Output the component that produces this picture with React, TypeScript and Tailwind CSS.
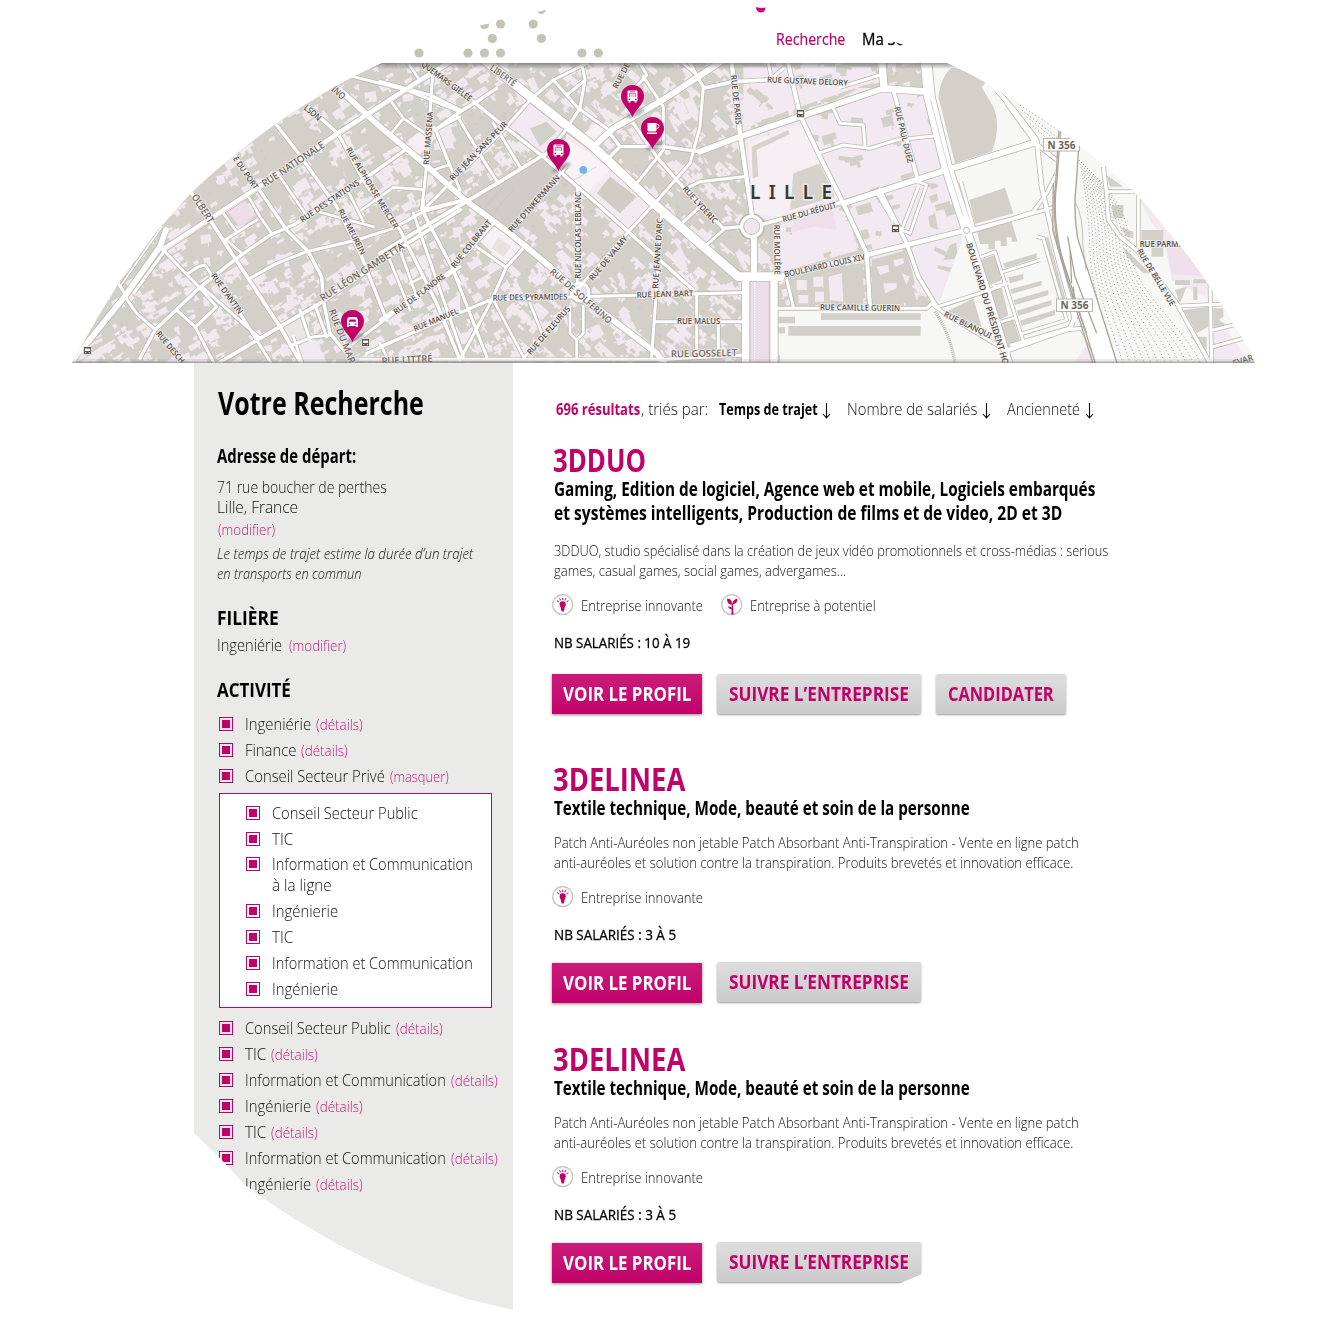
import { useLayoutEffect, useRef, useState, type ReactNode } from 'react';

/* Condensed text: squeezes a line horizontally to the given measure. */
function Fit({ w, className = '', children }: { w: number; className?: string; children: ReactNode }) {
  const ref = useRef<HTMLSpanElement>(null);
  const [scale, setScale] = useState(1);
  useLayoutEffect(() => {
    if (ref.current) setScale(w / ref.current.offsetWidth);
  }, [w]);
  return (
    <span className={`block shrink-0 whitespace-nowrap ${className}`} style={{ width: w }}>
      <span ref={ref} className="inline-block origin-left" style={{ transform: `scaleX(${scale})` }}>
        {children}
      </span>
    </span>
  );
}

/* ---------- map ---------- */

type Tile = 'a' | 'b' | 'c' | 'd';
const tiles: Record<Tile, string> = {
  a: 'translate(60 50) scale(.33333)',
  b: 'translate(380 0) scale(.33333)',
  c: 'translate(680 0) scale(.33333)',
  d: 'translate(930 50) scale(.33333)',
};

const roads: [Tile, string, number][] = [
  ['a', 'M310 598L600 410L835 250L1090 85L1180 30', 15],
  ['a', 'M60 905L190 745L300 590L318 540', 17],
  ['a', 'M30 950L60 900', 14],
  ['a', 'M222 728L312 605', 9],
  ['a', 'M180 710L305 530', 5],
  ['a', 'M395 430L460 525L525 625L660 830L735 960', 11],
  ['a', 'M745 170L835 252L915 400L1020 540L1050 600L1130 760L1200 930', 10],
  ['a', 'M650 225L715 310L830 470L905 620L980 810', 10],
  ['a', 'M520 310L595 415L680 540L745 605L785 680L790 750L810 850L880 935', 10],
  ['a', 'M880 80L1040 120L1200 185', 9],
  ['a', 'M240 925L285 840L420 712L530 625L630 555L700 525L820 450L930 375L1035 300', 10],
  ['a', 'M465 945L660 830L780 760L1035 585L1200 480', 11],
  ['a', 'M570 685L650 640L740 605L890 570L1000 535L1090 485L1200 455', 9],
  ['a', 'M495 570L590 510M490 490L530 545M560 430L600 500L635 550M500 570L545 610', 8],
  ['a', 'M310 600L420 714L470 770L405 832M355 785L405 830L465 945', 9],
  ['a', 'M195 740L230 790L285 838M175 700L200 740', 9],
  ['a', 'M385 670L415 650L435 645L455 675L540 790L640 950M425 710L600 865', 9],
  ['a', 'M660 380L735 490M775 485L940 530M865 425L910 515M905 480L1000 412L1085 418', 8],
  ['a', 'M1118 70L1100 345L1085 480', 9],
  ['a', 'M1045 40L1075 85M990 150L1030 205L1110 260M1030 205L990 255M1125 240L1200 200M1125 235L1170 350M1120 360L1165 345', 8],
  ['a', 'M880 880L980 805L1200 650M920 910L1200 785M690 888L760 860L815 855M720 780L750 870M765 765L800 860', 9],
  ['a', 'M985 620L1050 780M1020 600L1070 740M1050 700L1090 680M1090 485L1200 700M960 880L1000 960M700 860L730 950', 8],
  ['b', 'M300 170L450 290L640 440L820 610L1075 830L1200 830', 26],
  ['b', 'M-120 270L0 380L120 480L255 600L390 700L510 800L640 915L830 1060L870 1110', 17],
  ['b', 'M0 245L150 285L240 330M280 305L380 385L490 470L545 520L650 610L750 700L940 870', 10],
  ['b', 'M230 345L310 480L355 550M340 370L420 500M240 335L300 300M165 385L240 570', 9],
  ['b', 'M165 390L240 335L290 305L350 265', 10],
  ['b', 'M490 465L360 545L250 610L0 760', 11],
  ['b', 'M130 630L250 600M130 630L200 560L380 380L450 300L520 240L620 190', 9],
  ['b', 'M520 240L595 325L680 385M605 190L615 240L600 325L550 400L490 470M560 285L610 245', 9],
  ['b', 'M640 440L700 385L840 305L1000 200L1030 180', 18],
  ['b', 'M910 190L945 220L970 260', 9],
  ['b', 'M680 480L720 440L850 440L960 455M690 400L720 440M760 370L830 470L890 540L1030 685L1085 680', 10],
  ['b', 'M590 870L750 690L825 610L930 490L960 380L970 260L930 190M850 450L770 550M790 230L850 320L850 450M760 270L800 225L780 190', 9],
  ['b', 'M1055 190L1080 400L1115 640', 13],
  ['b', 'M960 455L1080 410L1200 370M970 265L1060 245L1200 238', 11],
  ['b', 'M905 670L960 620M910 570L960 545L1090 530M1030 690L980 735', 9],
  ['b', 'M845 640L830 860L815 1070', 9],
  ['b', 'M592 560L592 850M400 690L560 500', 8],
  ['b', 'M130 600L130 640L215 800L320 1070M100 640L250 1070M0 960L215 810L340 670', 9],
  ['b', 'M0 1040L330 900L590 890L1085 878M240 1080L330 910L380 800L430 745M290 740L375 800', 9],
  ['b', 'M340 900L430 1070M450 910L490 1010M570 920L430 1075M570 920L570 1000L590 1020L610 1000L610 920M590 1020V1075', 8],
  ['b', 'M-60 1078L860 1078L1090 1065M825 965L1085 965M950 880V1065M1015 965V1050', 9],
  ['b', 'M1097 830V1100M1182 830V1100', 22],
  ['b', 'M1122 700V830', 18],
  ['c', 'M60 455L180 410L360 350L610 265', 17],
  ['c', 'M610 265L740 275', 20],
  ['c', 'M605 180L612 265', 22],
  ['c', 'M738 180L748 290L800 500L862 690', 32],
  ['c', 'M862 690L930 900L990 1100', 20],
  ['c', 'M325 190L360 345L415 460L490 610L560 760L570 920', 12],
  ['c', 'M490 610L800 510L1060 430', 17],
  ['c', 'M560 765L680 735L860 690M300 828L560 765', 14],
  ['c', 'M250 672L490 605', 11],
  ['c', 'M480 262L600 225M265 190L275 235L310 205', 9],
  ['c', 'M460 325L480 370L550 375L555 440M415 460L490 435L570 445L650 420L760 408', 9],
  ['c', 'M640 270L715 545M600 570L680 730L715 830L770 920M590 575L640 660', 11],
  ['c', 'M715 545L740 555L690 700L665 690L715 560', 8],
  ['c', 'M280 925L740 925L755 910M775 920L960 860M760 915L800 945L985 1055M318 830L340 920', 9],
  ['c', 'M870 690L1000 655L1060 635L1100 580L1130 520M870 695L1120 622M842 545L880 680', 9],
  ['c', 'M985 1050L1100 1010L1170 985L1190 940', 12],
  ['c', 'M950 270L1010 340L1070 420L1085 560L1130 760L1185 960', 12],
  ['c', 'M905 770L945 755L1030 1025M970 815L1080 780M1070 710L1090 715L1160 960L1030 1000M945 860L985 850M965 965L1000 955', 8],
  ['d', 'M60 355L310 275L380 330M230 160L310 270M245 885L400 840L455 835L520 950', 10],
  ['d', 'M520 350L530 430L535 510L570 560L620 600L740 760L840 940', 10],
  ['d', 'M530 425L620 425M625 430L625 590M745 768L880 762M840 700L845 940M850 840L910 825M850 890L940 865', 9],
];

const labels: [string, Tile, number, number, number, number, number][] = [
  ['RUE NATIONALE', 'a', 614, 412, 796, 290, 10],
  ['RUE DES STATIONS', 'a', 727, 518, 900, 402, 8],
  ['RUE ALPHONSE MERCIER', 'a', 857, 298, 1002, 538, 8],
  ['RUE MEUREIN', 'a', 833, 482, 903, 616, 8],
  ['RUE MASSENA', 'a', 1107, 345, 1119, 186, 8],
  ['RUE LÉON GAMBETTA', 'a', 788, 755, 1035, 594, 10],
  ['RUE DE FLANDRE', 'a', 1008, 795, 1158, 682, 8],
  ['RUE MANUEL', 'a', 1065, 845, 1197, 790, 8],
  ['RUE D’ANTIN', 'a', 452, 677, 536, 794, 8],
  ['RUE DESCH', 'a', 287, 852, 362, 942, 8],
  ['RUE DU MAR', 'a', 806, 782, 868, 942, 9.5],
  ['RUE LITTRÉ', 'a', 965, 944, 1118, 936, 10],
  ['E DU PORT', 'a', 518, 326, 582, 420, 8],
  ['OLBERT', 'a', 394, 440, 446, 522, 10],
  ['LSON', 'a', 730, 176, 774, 214, 8.5],
  ['INO', 'a', 812, 120, 846, 150, 9.5],
  ['QUEMARS GIÉLÉE', 'b', 122, 196, 268, 305, 8],
  ['LIBERTÉ', 'b', 328, 208, 400, 260, 9],
  ['RUE JEAN SANS PEUR', 'b', 218, 544, 384, 374, 8],
  ['RUE D’INKERMANN', 'b', 396, 698, 541, 534, 8],
  ['RUE NICOLAS LEBLANC', 'b', 603, 836, 603, 576, 8],
  ['RUE DE VALMY', 'b', 638, 844, 744, 716, 8],
  ['RUE COLBRANT', 'b', 224, 806, 336, 668, 8],
  ['RUE DES PYRAMIDES', 'b', 338, 902, 562, 898, 8],
  ['RUE DE SOLFERINO', 'b', 508, 818, 686, 972, 9],
  ['RUE DE FLEURUS', 'b', 452, 1066, 572, 928, 8],
  ['RUE JEANNE D’ARC', 'b', 834, 866, 848, 656, 8],
  ['RUE JEAN BART', 'b', 770, 893, 940, 888, 8],
  ['RUE MALUS', 'b', 891, 972, 1021, 972, 8],
  ['RUE GOSSELET', 'b', 873, 1072, 1071, 1068, 9.5],
  ['RUE LYDÉRIC', 'b', 906, 568, 1002, 672, 8],
  ['RUE DE L', 'b', 712, 268, 760, 176, 8],
  ['RUE DE PARIS', 'b', 1052, 226, 1068, 374, 8],
  ['RUE MOLIÈRE', 'b', 1182, 674, 1184, 824, 8],
  ['RUE GUSTAVE DELORY', 'c', 261, 247, 503, 257, 8],
  ['RUE PAUL DUEZ', 'c', 643, 322, 683, 490, 8],
  ['RUE DU RÉDUIT', 'c', 310, 667, 470, 622, 8],
  ['BOULEVARD LOUIS XIV', 'c', 315, 832, 556, 778, 8.3],
  ['RUE CAMILLE GUERIN', 'c', 420, 930, 660, 933, 8],
  ['RUE BLANQUI', 'c', 790, 948, 930, 1016, 8],
  ['BOULEVARD DU PRÉSIDENT HO', 'c', 858, 732, 970, 1096, 8.5],
  ['RUE PARM.', 'd', 629, 591, 752, 591, 8],
  ['RUE DE BELLE VUE', 'd', 620, 602, 722, 770, 8],
  ['EVAR', 'd', 912, 950, 972, 930, 9],
];

/* Deterministic scatter of courtyards and sheds between the streets. */
function scatter(seed: number, n: number, size: number) {
  let s = seed;
  const r = () => ((s = (s * 16807) % 2147483647) / 2147483647);
  let d = '';
  for (let i = 0; i < n; i++) {
    const x = 60 + r() * 910;
    const y = 55 + r() * 310;
    const a = ((x < 500 ? -32 : x < 770 ? 42 : -16) * Math.PI) / 180 + (r() > 0.8 ? 0.4 : 0);
    const w = size * (0.4 + r());
    const h = size * (0.3 + r() * 0.8);
    const k = 0.3 + r() * 0.5;
    const pts = [[0, 0], [w, 0], [w, h * k], [w * 0.7, h * k], [w * 0.7, h], [w * k, h], [w * k, h * 0.7], [0, h * 0.7]];
    d +=
      pts
        .map(([px, py], j) => {
          const X = x + px * Math.cos(a) - py * Math.sin(a);
          const Y = y + px * Math.sin(a) + py * Math.cos(a);
          return `${j ? 'L' : 'M'}${X.toFixed(1)} ${Y.toFixed(1)}`;
        })
        .join('') + 'Z';
  }
  return d;
}
const courtyards = scatter(71, 1100, 14);
const yards = scatter(907, 900, 6);
const sheds = scatter(4211, 1500, 5);
const blocks = scatter(33, 380, 13);
const nooks = scatter(5309, 700, 4);

const tracks = Array.from({ length: 13 }, (_, i) => {
  const x0 = 448 + i * 6;
  const x1 = 480 + i * 10;
  const x2 = 560 + i * 21;
  return `M${x0} ${330 + i * 6}C${x0 + 20} 430 ${x1 - 5} 480 ${x1} 600S${x2 - 30} 850 ${x2} 945`;
});

function Bus() {
  return (
    <g transform="translate(0 -20.5)">
      <path d="M-4 -6H4Q5 -6 5 -5V4.5H4V6H2V4.5H-2V6H-4V4.5H-5V-5Q-5 -6 -4 -6Z" fill="#fff" />
      <path d="M-2.5 -5H2.5V-4.2H-2.5ZM-3.4 -3H3.4V.6H-3.4ZM-4 2.2H-2.4V3.4H-4ZM2.4 2.2H4V3.4H2.4Z" fill="#c10069" />
      <path d="M-3 -2.6H3V.4H-3Z" fill="#f3c9df" />
    </g>
  );
}

function Stop({ x, y }: { x: number; y: number }) {
  return (
    <g transform={`translate(${x} ${y})`}>
      <rect x="-4" y="-4" width="8" height="8" rx="1" fill="#5b564d" stroke="#f7f4f5" strokeWidth=".8" />
      <path d="M-2.6 -2H2.6V.6H-2.6ZM-2.4 1.8H-1.2V2.8H-2.4ZM1.2 1.8H2.4V2.8H1.2Z" fill="#f7f4f5" />
    </g>
  );
}

function Pin({ x, y, kind }: { x: number; y: number; kind: 'bus' | 'metro' | 'cup' }) {
  return (
    <g transform={`translate(${x} ${y})`}>
      <ellipse cx="4" cy="-2" rx="10" ry="3.2" fill="#555" opacity=".4" filter="url(#soft)" transform="rotate(-24)" />
      <path d="M0 0C-2 -6 -11.5 -13 -11.5 -20.5A11.5 11.5 0 0 1 11.5 -20.5C11.5 -13 2 -6 0 0Z" fill="#c10069" />
      {kind === 'bus' && <Bus />}
      {kind === 'metro' && (
        <>
          <path d="M-5.5 -15V-21Q-5.5 -25 -2.5 -25H2.5Q5.5 -25 5.5 -21V-15H3.5V-16H-3.5V-15Z" fill="#fff" />
          <path d="M-3.6 -20.2L-3 -22.6H3L3.6 -20.2ZM-4 -18.6H-2.2V-17.2H-4ZM2.2 -18.6H4V-17.2H2.2Z" fill="#c10069" />
        </>
      )}
      {kind === 'cup' && (
        <>
          <path d="M-5 -26H4V-19Q4 -17.5 2.5 -17.5H-3.5Q-5 -17.5 -5 -19ZM-5.5 -16.5H4.5V-15H-5.5Z" fill="#fff" />
          <path d="M4 -24.6H5.4Q6.6 -24.4 6.4 -22.6Q6 -20.6 4 -20.4" fill="none" stroke="#fff" />
        </>
      )}
    </g>
  );
}

function CityMap() {
  return (
    <svg viewBox="0 63 1327 300" className="block h-[300px] w-[1327px]">
      <defs>
        <clipPath id="dome">
          <path d="M72 363L98 317L120 281L158 230L191 193C215 170 245 146 277 123C315 97 350 77 382 63H947C965 71 982 80 997 90C1025 106 1055 127 1080 146C1105 165 1130 186 1150 209C1165 227 1192 259 1210 287C1228 313 1243 337 1255 363Z" />
        </clipPath>
        <clipPath id="dense">
          <path d="M0 63H922L930 100L966 228L937 307H775V363H0Z" />
        </clipPath>
        <clipPath id="centre"><path d="M745 63H925L966 228L940 307H868V255L775 275L752 212Z" /></clipPath>
        <filter id="soft"><feGaussianBlur stdDeviation="1.2" /></filter>
        <linearGradient id="lip" x1="0" y1="0" x2="0" y2="1">
          <stop offset="0" stopColor="#555" stopOpacity=".6" />
          <stop offset="1" stopColor="#555" stopOpacity="0" />
        </linearGradient>
      </defs>
      <g clipPath="url(#dome)">
        <rect y="63" width="1327" height="300" fill="#f7f7f5" />
        <g clipPath="url(#dense)">
          <rect y="63" width="1000" height="300" fill="#d3d0ca" />
          <path d={courtyards} fill="#f2e9ef" />
          <path d={yards} fill="#f2e9ef" />
          <path d={sheds} fill="#d3d0ca" />
          <path d={nooks} fill="#cbc8c2" opacity=".6" />
          <path d="M745 140L800 118L860 88L930 88L966 228L940 307L868 255L842 205L770 222L752 212Z" fill="#f3e9f0" />
          <path d="M920 88L966 228L937 307L870 250Z" fill="#f3e9f0" />
          <g transform={tiles.c}>
            <path d="M190 200H600V240L360 320L190 380Z" fill="#f3e9f0" />
            <path d="M280 680L480 620L540 750L290 820Z" fill="#f3e9f0" />
          </g>
          <path d={blocks} fill="#d3d0ca" clipPath="url(#centre)" />
          <g transform={tiles.c}>
            <path d="M205 425L370 372L480 592L300 650L220 640Z" fill="#f6f0f4" />
            <path d="M215 440L325 390L330 402L230 450L235 530L218 535ZM340 520L420 490L465 590L330 630Z" fill="#d6d3cd" />
            <path d="M345 655L455 625L470 690L400 680L330 700Z" fill="#efdfea" />
            <path d="M575 780L680 750L705 850L640 920H578ZM330 820L550 790V915H340Z" fill="#d3d0ca" />
            <path d="M350 840H380V870H350ZM400 830H430V860H400ZM355 885H385V910H355ZM405 875H432V905H405ZM445 830L485 820L490 905L450 900Z" fill="#f3e9f0" />
            <path d="M590 800L625 795L628 815L600 825ZM640 780L670 775L672 790L645 800ZM610 850H650V865L615 880ZM665 820L690 830L680 855Z" fill="#f3e9f0" />
            <path d="M690 760L850 705L935 860L775 910Z" fill="#f3e9f0" />
            <path d="M765 740L800 755L795 768L762 752ZM810 735L828 728L835 775L790 780ZM775 795L820 805L818 818L772 805ZM850 840L865 835L868 870L850 870Z" fill="#d3d0ca" />
            <path d="M748 590L770 580L775 600L755 610ZM790 620L830 610L835 640L800 650ZM745 650L765 640L775 690L750 680Z" fill="#d3d0ca" />
          </g>
          <g transform={tiles.a}>
            <path d="M500 482L550 448L588 496L540 532Z" fill="#ecdde7" />
            <path d="M665 835L725 800L745 860L690 885Z" fill="#e9e7e4" />
            <path d="M690 895L770 870L800 940H720Z" fill="#f3e9f0" />
            <path d="M1035 860L1200 730V790L1060 850Z" fill="#f3e9f0" />
            <path d="M1045 270L1085 240L1115 270L1075 320Z" fill="#f6eef3" />
          </g>
          <g transform={tiles.b}>
            <path d="M380 370L450 310L550 390L490 460Z" fill="#f3e9f0" />
            <path d="M450 385L500 365L530 395L480 440Z" fill="#d3d0ca" />
            <path d="M250 610L360 548L490 470L530 520L395 690Z" fill="#d0cdc8" />
            <path d="M540 500L560 400L690 500L820 620L750 695Z" fill="#f3ebf1" />
            <path d="M560 420L600 440L690 510L620 580L560 520Z" fill="#f8f3f6" />
            <path d="M650 580L690 530L770 590L720 640Z" fill="#d0cdc7" />
            <path d="M295 720L345 670L420 745L380 795Z" fill="#f6f1f4" />
            <path d="M335 745L355 712L395 740L370 770Z" fill="#e5e2df" />
            <path d="M600 410L650 370L680 390L640 440Z" fill="#f7f1f4" />
            <path d="M300 640L370 560M330 650L400 570M550 560L650 500" stroke="#c6c3bd" strokeWidth="2" />
          </g>
        </g>
        <g transform={tiles.b}>
          <path d="M1110 840H1168V1095H1110Z" fill="#eddde8" stroke="#c9c3c2" strokeWidth="2" />
          <path d="M1124 846V1090" stroke="#fff" strokeWidth="4" strokeDasharray="4 4" />
        </g>
        <g transform={tiles.c} fill="#d3d0ca">
          <path d="M815 203Q785 225 775 290L790 350L825 490L935 455Q965 380 940 320L905 262L922 240Q870 205 815 203Z" />
          <path d="M868 600L975 563L1000 640L885 672ZM890 690L995 665L1013 725H995V712H980V738H962V722H945V748H925V732H900Z" />
          <path d="M423 940H722V960H423ZM325 978H722V1007H325ZM285 950H345V970H285ZM285 982H315V1000H285ZM285 1065H300V1090H285Z" />
          <path d="M900 780L945 765L965 840L920 860ZM925 875L965 862L985 945L950 965ZM960 970L1000 958L1020 1020L985 1040Z" />
          <path d="M970 790L1070 760V775L975 805ZM985 832L1030 822V838L990 850ZM990 868L1085 842V856L995 882ZM1000 900L1105 870V885L1005 915ZM1010 932L1115 900V915L1015 948ZM1020 962L1125 930V945L1025 978Z" />
          <path d="M1085 715L1105 710L1165 930L1145 940Z" />
          <path d="M790 940L880 895L905 980L860 985Z" />
        </g>
        <g transform={tiles.d}>
          <path d="M620 430L840 700V750L725 690L700 560L665 520Z" fill="#f3e9f0" />
          <path d="M710 590L780 590L835 680L725 672Z" fill="#f0e0eb" />
          <path d="M525 810L555 940H430Z" fill="#f3e9f0" />
          <path d="M850 780L960 940H850Z" fill="#f3e9f0" />
          <path d="M530 375L580 410H540ZM545 465H580V505H550ZM570 530L610 545V565L590 560ZM580 590L660 670H640L590 620ZM635 540H700V620H665V570H635ZM735 690H780V705H735ZM790 688H830V700H790ZM735 720L770 710L750 760ZM790 710H802V750H790ZM850 775H880V800L850 820ZM760 780L835 770V830L800 850ZM850 800L900 830H850ZM780 860H830V910Z" fill="#d3d0ca" />
          <g fill="none" stroke="#a29c92" strokeWidth="3" strokeDasharray="3 8">
            {tracks.map((d) => <path key={d} d={d} />)}
            <path d="M270 165L400 250M275 180L385 265M290 200L370 265M300 220L350 265" />
          </g>
          <path d="M15 785Q60 850 75 940" fill="none" stroke="#bdb9b1" strokeWidth="10" strokeDasharray="3 3" />
        </g>
        <g fill="none" stroke="#bfbab3" strokeLinejoin="round">
          {roads.map(([t, d, w]) => <path key={t + d} transform={tiles[t]} d={d} strokeWidth={w + 5} />)}
          <circle cx="751.7" cy="226.5" r="11" strokeWidth="5" />
          <circle cx="580" cy="292" r="9" strokeWidth="5" />
        </g>
        <circle cx="580" cy="292" r="8" fill="#eddde8" />
        <g fill="none" stroke="#fff" strokeLinejoin="round" strokeLinecap="round">
          {roads.map(([t, d, w]) => <path key={t + d} transform={tiles[t]} d={d} strokeWidth={w} />)}
          <circle cx="751.7" cy="226.5" r="10" strokeWidth="3.4" />
          <circle cx="580" cy="292" r="9" strokeWidth="2.8" />
        </g>
        <circle cx="751.7" cy="226.5" r="8" fill="#f0e6ed" stroke="#c9c4bf" />
        <circle cx="966.5" cy="230.5" r="6" fill="#fff" />
        <circle cx="966.5" cy="230.5" r="3" fill="#fff" stroke="#bfbab3" />
        <path transform={tiles.c} d="M752 300L802 495L850 650" fill="none" stroke="#c5c0ba" strokeWidth="2" />
        <path transform={tiles.a} d="M320 598L600 416L840 254L1090 92" fill="none" stroke="#d1cdc8" strokeWidth="2" />
        <g transform={tiles.d} fill="none">
          <path d="M418 240L408 400Q398 480 412 570L460 720L535 960" stroke="#aaa499" strokeWidth="66" />
          <path d="M418 240L408 400Q398 480 412 570L460 720L535 960" stroke="#fff" strokeWidth="58" />
          <path d="M392 240L380 400Q366 500 395 620L430 750L495 960M370 400L368 540L415 700L470 850M413 560L435 680L500 850M430 710L436 780M420 600L425 700" stroke="#aaa499" strokeWidth="4" />
          <path d="M437 460Q460 500 458 580L468 660" stroke="#aaa499" strokeWidth="2" />
        </g>
        <g fontFamily="'Noto Sans', sans-serif" fontWeight="500" fill="#4b4740" stroke="#f3eef0" strokeWidth="2" strokeOpacity=".75" style={{ paintOrder: 'stroke' }}>
          {labels.map(([text, t, x1, y1, x2, y2, size]) => {
            const ang = (Math.atan2(y2 - y1, x2 - x1) * 180) / Math.PI;
            const len = Math.hypot(x2 - x1, y2 - y1);
            return (
              <g key={text} transform={tiles[t]}>
                <text transform={`translate(${x1} ${y1}) rotate(${ang}) scale(3)`} fontSize={size} fill={size >= 9 ? '#6a655b' : '#4b4740'} textLength={len / 3} lengthAdjust="spacingAndGlyphs">
                  {text}
                </text>
              </g>
            );
          })}
          <text x="750" y="198.5" fontSize="19" fontWeight="600" textLength="82" strokeWidth="3" fill="#3c382f">LILLE</text>
        </g>
        {[[1043.5, 138.5], [1056.5, 299]].map(([x, y]) => (
          <g key={y}>
            <rect x={x} y={y} width="36" height="12.5" fill="#fff" stroke="#aaa499" strokeWidth=".8" />
            <text x={x + 4} y={y + 10} fontFamily="'Noto Sans', sans-serif" fontWeight="700" fontSize="10.5" fill="#6b655b" textLength="28" lengthAdjust="spacingAndGlyphs">N 356</text>
          </g>
        ))}
        <Stop x={87.5} y={350.5} />
        <Stop x={365.5} y={342.5} />
        <Stop x={800.5} y={113.5} />
        <Stop x={895.5} y={228.5} />
        <circle cx="583.3" cy="169.8" r="3.9" fill="#72b5e6" />
        <rect x="0" y="63" width="1327" height="6" fill="url(#lip)" />
        <rect x="0" y="361.5" width="1327" height="1.5" fill="#777" opacity=".6" />
        <rect x="0" y="359" width="1327" height="2.5" fill="#777" opacity=".15" />
        <Pin x={632.5} y={117} kind="bus" />
        <Pin x={652.5} y={149} kind="cup" />
        <Pin x={558.5} y={171} kind="bus" />
        <Pin x={352.5} y={342} kind="metro" />
      </g>
    </svg>
  );
}

/* ---------- header ---------- */

const dots = [[419, 53], [468, 53], [484.5, 53], [500.5, 53], [582, 53], [598.3, 53], [492.4, 38.5], [541.4, 38.5], [500.5, 24], [533.2, 24]];

function Header() {
  return (
    <header className="flex h-[63px] bg-white">
      <svg viewBox="0 0 776 63" className="h-[63px] w-[776px] shrink-0">
        {dots.map(([x, y]) => <circle key={`${x}-${y}`} cx={x} cy={y} r="4.6" fill="#c5c2b6" />)}
        <path d="M480 25.5L489 23.5A4.6 4.6 0 0 1 480 25.5ZM537.5 12L545.8 9.8A4.6 4.6 0 0 1 537.5 12Z" fill="#c5c2b6" />
        <path d="M756.2 7Q761 8.5 765.5 7.5A4.7 4.7 0 1 1 756.2 7Z" fill="#c80f70" />
      </svg>
      <nav className="flex gap-[17px] pt-[27px] text-[16px] leading-[24px]">
        <Fit w={69} className="text-[#c10069] [-webkit-text-stroke:0.2px]">Recherche</Fit>
        <Fit w={42} className="text-black [-webkit-text-stroke:0.3px] [clip-path:polygon(0_0,23px_0,23px_12px,29px_14px,42px_18px,42px_24px,0_24px)]">Ma Sé</Fit>
      </nav>
    </header>
  );
}

/* ---------- sidebar ---------- */

function Check() {
  return (
    <span className="flex size-[14px] shrink-0 items-center justify-center border border-[#c10069]">
      <span className="size-2 bg-[#c10069]" />
    </span>
  );
}

type Item = { label: string; w: number; link?: string; lw?: number };

function Row({ label, w, link = '(détails)', lw = 47 }: Item) {
  return (
    <li className="flex h-[26px] items-center">
      <Check />
      <Fit w={w} className="ml-3">{label}</Fit>
      <Fit w={lw} className="mt-[2px] ml-[5px] text-[14px] text-[#c7197a]">{link}</Fit>
    </li>
  );
}

function SubRow({ label, w, className = 'h-[26px]' }: Item & { className?: string }) {
  return (
    <li className={`flex items-center ${className}`}>
      <Check />
      <Fit w={w} className="ml-3">{label}</Fit>
    </li>
  );
}

const topItems: Item[] = [
  { label: 'Ingeniérie', w: 66 },
  { label: 'Finance', w: 51 },
  { label: 'Conseil Secteur Privé', w: 140, link: '(masquer)', lw: 59 },
];
const lowItems: Item[] = [
  { label: 'Conseil Secteur Public', w: 146 },
  { label: 'TIC', w: 21 },
  { label: 'Information et Communication', w: 201 },
  { label: 'Ingénierie', w: 66 },
  { label: 'TIC', w: 21 },
  { label: 'Information et Communication', w: 201 },
  { label: 'Ingénierie', w: 66 },
];

function Sidebar() {
  return (
    <aside className="h-[947px] w-[319px] shrink-0 bg-[#eaeae8] pl-[23px] text-[16px] leading-[20px] font-light text-[#111] [clip-path:polygon(0_0,319px_0,319px_947px,273px_936px,229px_921px,183px_901px,143px_881px,99px_855px,69px_835px,51px_822px,26px_795px,0_770px)]">
      <Fit w={206} className="mt-[20px] ml-px text-[33px] leading-[40px] font-bold text-black">Votre Recherche</Fit>
      <Fit w={139} className="mt-[21px] text-[19px] leading-[24px] font-bold text-black">Adresse de départ:</Fit>
      <Fit w={170} className="mt-[9px]">71 rue boucher de perthes</Fit>
      <Fit w={81}>Lille, France</Fit>
      <Fit w={57} className="mt-[3px] ml-px text-[14px] text-[#c7197a]">(modifier)</Fit>
      <Fit w={256} className="mt-1 text-[14px] italic">Le temps de trajet estime la durée d’un trajet</Fit>
      <Fit w={144} className="text-[14px] italic">en transports en commun</Fit>
      <Fit w={62} className="mt-[22px] text-[19px] leading-[24px] font-bold text-black">FILIÈRE</Fit>
      <div className="mt-[5px] flex gap-[7px]">
        <Fit w={65}>Ingeniérie</Fit>
        <Fit w={57} className="mt-px text-[14px] text-[#c7197a]">(modifier)</Fit>
      </div>
      <Fit w={74} className="mt-[22px] text-[19px] leading-[24px] font-bold text-black">ACTIVITÉ</Fit>
      <div className="mt-[9px] pl-[2px]">
        <ul>{topItems.map((it, i) => <Row key={i} {...it} />)}</ul>
        <ul className="mt-1 h-[215px] w-[273px] border border-[#c10069] bg-white pt-[6px] pl-[26px]">
          <SubRow label="Conseil Secteur Public" w={146} />
          <SubRow label="TIC" w={21} />
          <li className="flex h-[46px] items-start pt-[2px] leading-[21px]">
            <span className="mt-[3px]"><Check /></span>
            <span className="ml-3 flex flex-col">
              <Fit w={201}>Information et Communication</Fit>
              <Fit w={60}>à la ligne</Fit>
            </span>
          </li>
          <SubRow label="Ingénierie" w={66} />
          <SubRow label="TIC" w={21} />
          <SubRow label="Information et Communication" w={201} />
          <SubRow label="Ingénierie" w={66} className="h-[25px]" />
        </ul>
        <ul className="mt-[7px]">{lowItems.map((it, i) => <Row key={i} {...it} />)}</ul>
      </div>
    </aside>
  );
}

/* ---------- results ---------- */

function Arrow() {
  return (
    <svg viewBox="0 0 9 16" className="mt-1 h-4 w-[9px] shrink-0" fill="none" stroke="#000" strokeWidth="1.1">
      <path d="M4.5 0V15M1 11L4.5 15L8 11" />
    </svg>
  );
}

function Badge({ kind }: { kind: 'idea' | 'sprout' }) {
  return (
    <svg viewBox="0 0 22 22" className="size-[22px] shrink-0">
      <circle cx="10.7" cy="10.7" r="10" fill="#fff" stroke="#c5c2b6" strokeWidth="1.2" />
      {kind === 'idea' ? (
        <>
          <path d="M7.6 10.4A3.1 3.1 0 0 1 13.8 10.4C13.8 12 12.6 13 12.4 14.6V16H11.9V17.4H9.5V16H9V14.6C8.8 13 7.6 12 7.6 10.4Z" fill="#c10069" />
          <path d="M10.7 3.8V6M7.6 4.2L8.6 6.4M13.8 4.2L12.8 6.4M5 6.6L7 8M16.4 6.6L14.4 8" stroke="#c10069" strokeWidth="1" />
        </>
      ) : (
        <>
          <path d="M10.4 20.5C10.8 17 10.6 14 10.8 9.4H12.2C12 14 12.2 17 12.6 20.5Z" fill="#c10069" />
          <path d="M11 10.5C7.5 10.5 5.8 8.2 6.2 4.4C9.6 4.6 11.2 6.8 11 10.5ZM11.6 10.2C11.4 7.2 13.2 5.2 16.4 4.8C16.8 8 14.8 10.2 11.6 10.2ZM11 15.4C8.6 15.4 7.4 14.4 7.2 12.6C9.6 12.4 11 13.4 11 15.4Z" fill="#c10069" />
        </>
      )}
    </svg>
  );
}

const grey = 'flex h-10 items-center rounded-[2px] bg-linear-to-b from-[#dedede] to-[#cbcbcb] pl-[13px] text-[#c10069] shadow-[0_1px_2px_rgba(0,0,0,0.4)]';

function Actions({ apply = false, cut = false }: { apply?: boolean; cut?: boolean }) {
  return (
    <div className="flex h-10 text-[19.5px] leading-[40px] font-bold">
      <button className="flex h-10 w-[150px] items-center bg-linear-to-b from-[#cb1a7b] to-[#c10069] pl-[11px] text-white shadow-[0_1px_3px_rgba(0,0,0,0.45)]">
        <Fit w={128}>VOIR LE PROFIL</Fit>
      </button>
      <button className={`ml-[15px] w-[204px] ${grey} ${apply ? '' : '-mt-px'} ${cut ? '[clip-path:polygon(-3px_-3px,207px_-3px,207px_31px,184px_41px,180px_43px,-3px_43px)]' : ''}`}>
        <Fit w={180} className="-ml-px">SUIVRE L’ENTREPRISE</Fit>
      </button>
      {apply && (
        <button className={`ml-[15px] w-[130px] ${grey}`}>
          <Fit w={106} className="-ml-px">CANDIDATER</Fit>
        </button>
      )}
    </div>
  );
}

type Company = {
  name: string; nameW: number; tags: [string, number][]; text: [string, number][];
  potential?: boolean; staff: string; staffW: number; box: string; textGap: string; actGap: string;
  apply?: boolean; cut?: boolean;
};

const delinea: Company = {
  name: '3DELINEA',
  nameW: 132,
  tags: [['Textile technique, Mode, beauté et soin de la personne', 416]],
  text: [
    ['Patch Anti-Auréoles non jetable Patch Absorbant Anti-Transpiration - Vente en ligne patch', 525],
    ['anti-auréoles et solution contre la transpiration. Produits brevetés et innovation efficace.', 519],
  ],
  staff: 'NB SALARIÉS : 3 À 5',
  staffW: 122,
  box: 'mt-[48px]',
  textGap: 'mt-[13px]',
  actGap: 'mt-[19px]',
};

const companies: Company[] = [
  {
    name: '3DDUO',
    nameW: 93,
    tags: [
      ['Gaming, Edition de logiciel, Agence web et mobile, Logiciels embarqués', 541],
      ['et systèmes intelligents, Production de films et de video, 2D et 3D', 508],
    ],
    text: [
      ['3DDUO, studio spécialisé dans la création de jeux vidéo promotionnels et cross-médias : serious', 554],
      ['games, casual games, social games, advergames...', 292],
    ],
    potential: true,
    staff: 'NB SALARIÉS : 10 À 19',
    staffW: 136,
    box: 'mt-[22px]',
    textGap: 'mt-[16px]',
    actGap: 'mt-[22px]',
    apply: true,
  },
  delinea,
  { ...delinea, box: 'mt-[39px]', cut: true },
];

function Result(c: Company) {
  return (
    <article className={c.box}>
      <Fit w={c.nameW} className="ml-px text-[33px] leading-[34px] font-bold text-[#c10069]">{c.name}</Fit>
      <div className="pl-[2px]">
        {c.tags.map(([t, w]) => (
          <Fit key={t} w={w} className="text-[19px] leading-[24px] font-bold text-black">{t}</Fit>
        ))}
        <div className={`${c.textGap} text-[14px] leading-[20px] font-light text-[#111]`}>
          {c.text.map(([t, w]) => <Fit key={t} w={w}>{t}</Fit>)}
        </div>
      </div>
      <div className="mt-[13px] -ml-px flex h-[22px] items-center text-[14px] font-light text-[#111]">
        <span className="flex pl-px"><Badge kind="idea" /></span>
        <Fit w={122} className="ml-[7px]">Entreprise innovante</Fit>
        {c.potential && (
          <>
            <span className="ml-[18px] flex"><Badge kind="sprout" /></span>
            <Fit w={126} className="ml-[7px]">Entreprise à potentiel</Fit>
          </>
        )}
      </div>
      <Fit w={c.staffW} className="mt-[16px] ml-[2px] text-[15px] leading-[20px] text-black [-webkit-text-stroke:0.3px]">{c.staff}</Fit>
      <div className={c.actGap}><Actions apply={c.apply} cut={c.cut} /></div>
    </article>
  );
}

export default function App() {
  return (
    <div className="h-[1327px] w-[1327px] overflow-hidden bg-white font-['Open_Sans','Noto_Sans',sans-serif]">
      <Header />
      <CityMap />
      <div className="flex pl-[194px]">
        <Sidebar />
        <main className="ml-[39px] pt-[36px]">
          <div className="flex h-[22px] pl-1 text-[16px] leading-[20px] font-light text-[#111]">
            <Fit w={84} className="font-bold text-[#c10069]">696 résultats</Fit>
            <Fit w={67} className="ml-px">, triés par:</Fit>
            <Fit w={99} className="mr-1 ml-[11px] font-bold text-black">Temps de trajet</Fit>
            <Arrow />
            <Fit w={130} className="mr-[5px] ml-4">Nombre de salariés</Fit>
            <Arrow />
            <Fit w={73} className="mr-[5px] ml-4">Ancienneté</Fit>
            <Arrow />
          </div>
          {companies.map((c, i) => <Result key={i} {...c} />)}
        </main>
      </div>
    </div>
  );
}
